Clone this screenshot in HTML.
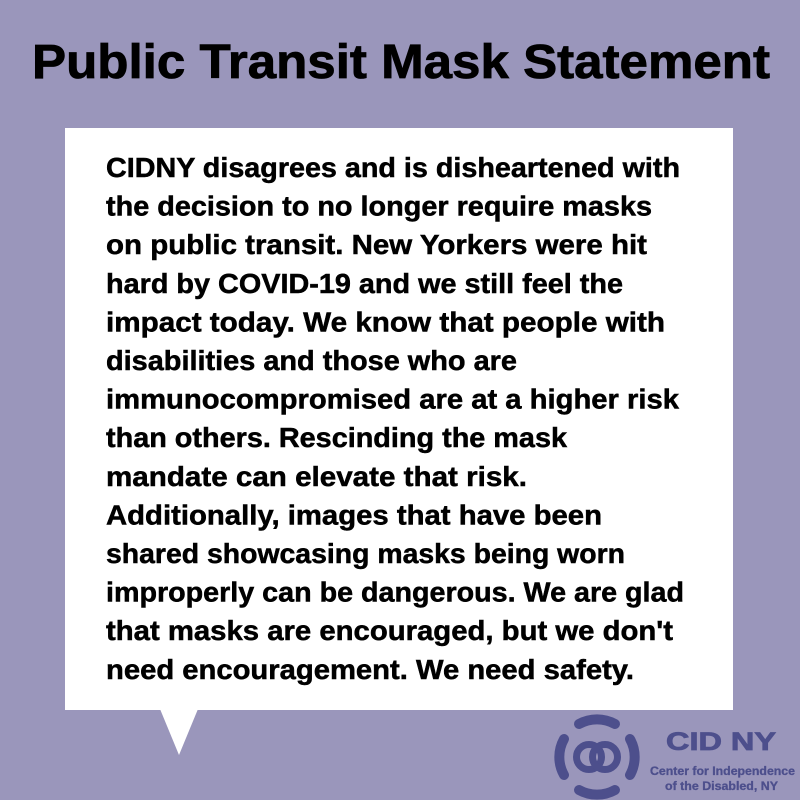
<!DOCTYPE html>
<html><head><meta charset="utf-8"><style>
html,body{margin:0;padding:0;width:800px;height:800px;overflow:hidden;background:#9a96bb}
svg{display:block}
text{font-family:"Liberation Sans",sans-serif;font-weight:bold}
</style></head><body>
<svg width="800" height="800" viewBox="0 0 800 800" xmlns="http://www.w3.org/2000/svg">
<rect width="800" height="800" fill="#9a96bb"/>
<text x="32" y="78" font-size="48" fill="#000" stroke="#000" stroke-width="0.8" textLength="738" lengthAdjust="spacingAndGlyphs">Public Transit Mask Statement</text>
<rect x="65" y="128" width="668" height="582" fill="#fff"/>
<polygon points="160,709 198,709 179,755" fill="#fff"/>
<g font-size="27.5" fill="#000" stroke="#000" stroke-width="0.5">
<text x="106" y="177" textLength="574" lengthAdjust="spacingAndGlyphs">CIDNY disagrees and is disheartened with</text>
<text x="106" y="215.6" textLength="546" lengthAdjust="spacingAndGlyphs">the decision to no longer require masks</text>
<text x="106" y="254.2" textLength="541" lengthAdjust="spacingAndGlyphs">on public transit. New Yorkers were hit</text>
<text x="106" y="292.8" textLength="517" lengthAdjust="spacingAndGlyphs">hard by COVID-19 and we still feel the</text>
<text x="106" y="331.4" textLength="559" lengthAdjust="spacingAndGlyphs">impact today. We know that people with</text>
<text x="106" y="370" textLength="411" lengthAdjust="spacingAndGlyphs">disabilities and those who are</text>
<text x="106" y="408.6" textLength="573" lengthAdjust="spacingAndGlyphs">immunocompromised are at a higher risk</text>
<text x="106" y="447.2" textLength="461" lengthAdjust="spacingAndGlyphs">than others. Rescinding the mask</text>
<text x="106" y="485.8" textLength="421" lengthAdjust="spacingAndGlyphs">mandate can elevate that risk.</text>
<text x="106" y="524.4" textLength="496" lengthAdjust="spacingAndGlyphs">Additionally, images that have been</text>
<text x="106" y="563" textLength="519" lengthAdjust="spacingAndGlyphs">shared showcasing masks being worn</text>
<text x="106" y="601.6" textLength="578" lengthAdjust="spacingAndGlyphs">improperly can be dangerous. We are glad</text>
<text x="106" y="640.2" textLength="567" lengthAdjust="spacingAndGlyphs">that masks are encouraged, but we don't</text>
<text x="106" y="678.8" textLength="528" lengthAdjust="spacingAndGlyphs">need encouragement. We need safety.</text>
</g>
<g fill="none" stroke="#4d4f8c" stroke-width="10" stroke-linecap="round">
<path d="M579 724 A37 37 0 0 1 615 724"/>
<path d="M564 739 A37 37 0 0 0 564 775"/>
<path d="M630 739 A37 37 0 0 1 630 775"/>
<path d="M579 790 A37 37 0 0 0 615 790"/>
<circle cx="589" cy="757" r="12.5" stroke-width="7"/>
<circle cx="605" cy="757" r="12.5" stroke-width="7"/>
</g>
<text x="666" y="750" font-size="25" fill="#4d4f8c" stroke="#4d4f8c" stroke-width="0.8" textLength="110" lengthAdjust="spacingAndGlyphs">CID  NY</text>
<text x="650" y="775" font-size="11.5" fill="#4d4f8c" stroke="#4d4f8c" stroke-width="0.3" textLength="145" lengthAdjust="spacingAndGlyphs">Center for Independence</text>
<text x="665" y="790" font-size="11.5" fill="#4d4f8c" stroke="#4d4f8c" stroke-width="0.3" textLength="113" lengthAdjust="spacingAndGlyphs">of the Disabled, NY</text>
</svg>
</body></html>
